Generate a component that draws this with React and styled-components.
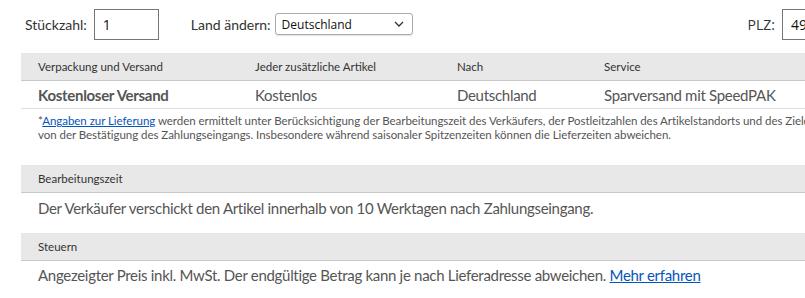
import React from 'react';
import styled, { createGlobalStyle } from 'styled-components';

const GlobalStyle = createGlobalStyle`
    html, body {
        margin: 0;
        padding: 0;
        background: #fff;
        overflow: hidden;
    }
    body {
        font-family: Lato, "Liberation Sans", sans-serif;
        color: #555;
    }
`;

const Page = styled.div`
    width: 980px;
    padding-left: 21px;
`;

const TopRow = styled.div`
    display: flex;
    align-items: center;
    height: 30px;
    padding: 9px 0 0 4px;
    width: 853px;
`;

const Field = styled.label`
    display: flex;
    align-items: center;
    gap: ${(p) => p.$inner || 7}px;
    margin-right: ${(p) => p.$gap || 0}px;
    margin-left: ${(p) => (p.$push ? 'auto' : '0')};
    font-size: 14px;
    color: #333;
    font-family: ${(p) => (p.$system ? '"Open Sans", sans-serif' : 'Lato, sans-serif')};
`;

const TextInput = styled.input`
    box-sizing: border-box;
    width: ${(p) => p.$w}px;
    height: 31px;
    border: 1px solid #767676;
    border-radius: 0;
    padding: 0 8px;
    font-size: 14px;
    font-family: "Open Sans", sans-serif;
    color: #111;
    outline: none;
`;

const Select = styled.div`
    box-sizing: border-box;
    width: 138px;
    height: 22px;
    border: 1px solid #ababab;
    border-radius: 3px;
    box-shadow: 0 1px 1px rgba(0, 0, 0, 0.12);
    display: flex;
    align-items: center;
    justify-content: space-between;
    padding: 0 8px 0 6px;
    font-family: "Open Sans", sans-serif;
    font-size: 12px;
    color: #111;
`;

const Band = styled.div`
    display: grid;
    grid-template-columns: ${(p) => p.$cols || '1fr'};
    align-items: center;
    height: 27px;
    margin-top: ${(p) => p.$top}px;
    background: #e8e8e8;
    border-bottom: 1px solid #c7c7c7;
    font-size: 11.5px;
    color: #333;
    padding-left: 17px;
`;

const Row = styled.div`
    display: grid;
    grid-template-columns: ${(p) => p.$cols || '1fr'};
    align-items: center;
    height: ${(p) => p.$h || 27}px;
    padding-left: 17px;
    font-size: 15px;
    letter-spacing: -0.3px;
    color: #555;
    border-bottom: ${(p) => (p.$line ? '1px solid #ddd' : 'none')};
`;

const Strong = styled.span`
    font-weight: 700;
`;

const Note = styled.div`
    padding: 5px 0 0 17px;
    font-size: 11.5px;
    line-height: 14px;
    letter-spacing: -0.04px;
    color: #555;
`;

const NoteLine = styled.span`
    display: block;
    white-space: nowrap;
`;

const Link = styled.a`
    color: #0654ba;
    text-decoration: underline;
`;

const Chevron = () => (
    <svg width="10" height="6" viewBox="0 0 10 6">
        <path d="M1 1l4 4 4-4" fill="none" stroke="#333" strokeWidth="1.3" />
    </svg>
);

const cols = '217px 202px 147px 1fr';

export default function App() {
    return (
        <Page>
            <GlobalStyle />
            <TopRow>
                <Field $gap={32}>
                    Stückzahl:
                    <TextInput $w={65} defaultValue="1" />
                </Field>
                <Field $inner={4}>
                    Land ändern:
                    <Select>
                        Deutschland
                        <Chevron />
                    </Select>
                </Field>
                <Field $push $system>
                    PLZ:
                    <TextInput $w={96} defaultValue="49" />
                </Field>
            </TopRow>

            <Band $cols={cols} $top={14}>
                <span>Verpackung und Versand</span>
                <span>Jeder zusätzliche Artikel</span>
                <span>Nach</span>
                <span>Service</span>
            </Band>
            <Row $cols={cols} $line>
                <Strong>Kostenloser Versand</Strong>
                <span>Kostenlos</span>
                <span>Deutschland</span>
                <span>Sparversand mit SpeedPAK</span>
            </Row>
            <Note>
                <NoteLine>
                    *<Link href="#">Angaben zur Lieferung</Link> werden ermittelt unter Berücksichtigung der
                    Bearbeitungszeit des Verkäufers, der Postleitzahlen des Artikelstandorts und des Zielorts
                    sowie des gewählten Versandservice – abhängig
                </NoteLine>
                <NoteLine>
                    von der Bestätigung des Zahlungseingangs. Insbesondere während saisonaler Spitzenzeiten
                    können die Lieferzeiten abweichen.
                </NoteLine>
            </Note>

            <Band $top={23}>Bearbeitungszeit</Band>
            <Row $h={30}>
                Der Verkäufer verschickt den Artikel innerhalb von 10 Werktagen nach Zahlungseingang.
            </Row>

            <Band $top={10}>Steuern</Band>
            <Row $h={28}>
                <span>
                    Angezeigter Preis inkl. MwSt. Der endgültige Betrag kann je nach Lieferadresse abweichen.{' '}
                    <Link href="#">Mehr erfahren</Link>
                </span>
            </Row>
        </Page>
    );
}
